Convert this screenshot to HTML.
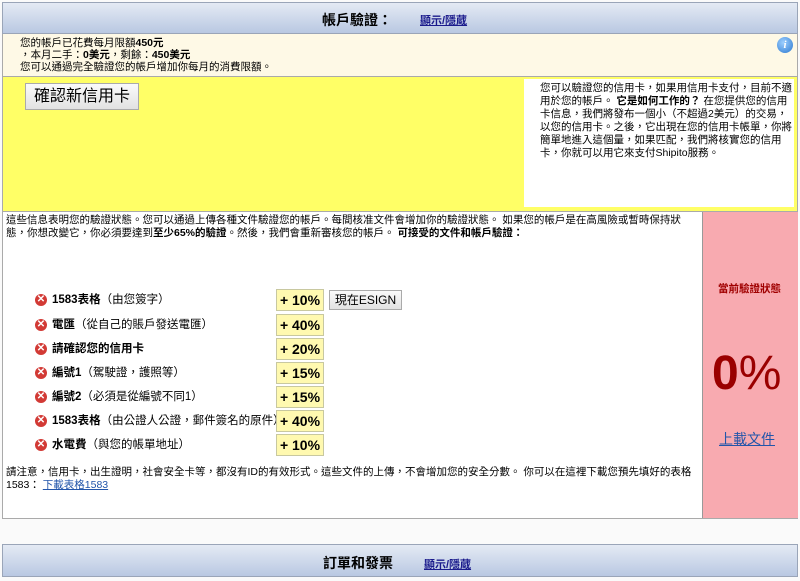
<!DOCTYPE html>
<html><head><meta charset="utf-8"><style>
body{margin:0;width:800px;height:581px;background:#fafafa;font-family:"Liberation Sans","Noto Sans CJK TC",sans-serif;font-size:11px;color:#000;position:relative;overflow:hidden}
.a{position:absolute}
.hdr{background:linear-gradient(#e4eaf4,#b9c8e2);border:1px solid #9aa5b8;box-sizing:border-box}
.ht{font-size:14px;font-weight:bold}
.lk{color:#1a1a8c;text-decoration:underline;font-weight:bold;font-size:11px}
.pc{position:absolute;left:276px;width:48px;height:22px;background:#fff9b0;border:1px solid #c8c8a0;box-sizing:border-box;font-weight:bold;font-size:14px;text-align:center;line-height:21px}
.x{position:absolute;left:35px;width:12px;height:12px;border-radius:50%;background:#d23a35;color:#fff;font-size:10px;line-height:12px;text-align:center;font-weight:bold}
.it{position:absolute;left:52px;font-size:11.5px;line-height:14px;white-space:nowrap}
</style></head><body>
<div class="a hdr" style="left:2px;top:2px;width:796px;height:32px"></div>
<div class="a ht" style="left:322px;top:10px">帳戶驗證：</div>
<div class="a lk" style="left:420px;top:12px">顯示/隱蔵</div>
<div class="a" style="left:2px;top:34px;width:796px;height:42px;background:#fef9e6;border-left:1px solid #aaa;border-right:1px solid #aaa;box-sizing:border-box"></div>
<div class="a" style="left:20px;top:37px;line-height:12px;font-size:10.5px">您的帳戶已花費每月限額<b>450元</b><br>，本月二手：<b>0美元</b>，剩餘：<b>450美元</b><br>您可以通過完全驗證您的帳戶增加你每月的消費限額。</div>
<div class="a" style="left:777px;top:37px;width:16px;height:16px;border-radius:50%;background:radial-gradient(circle at 40% 35%,#9fd0ff,#2a78d0);color:#fff;font-style:italic;font-weight:bold;font-size:11px;text-align:center;line-height:16px;font-family:'Liberation Serif',serif">i</div>
<div class="a" style="left:2px;top:76px;width:796px;height:136px;background:#ffff66;border:1px solid #aaa;box-sizing:border-box"></div>
<div class="a" style="left:25px;top:83px;width:114px;height:27px;background:linear-gradient(#fafafa,#e2e2e2);border:1px solid #aaa;box-sizing:border-box;font-size:16px;text-align:center;line-height:25px">確認新信用卡</div>
<div class="a" style="left:524px;top:79px;width:270px;height:128px;background:#fff"></div>
<div class="a" style="left:540px;top:82px;width:252px;line-height:13px;font-size:10.5px">您可以驗證您的信用卡，如果用信用卡支付，目前不適用於您的帳戶。 <b>它是如何工作的？</b> 在您提供您的信用卡信息，我們將發布一個小（不超過2美元）的交易，以您的信用卡。之後，它出現在您的信用卡帳單，你將簡單地進入這個量，如果匹配，我們將核實您的信用卡，你就可以用它來支付Shipito服務。</div>
<div class="a" style="left:2px;top:212px;width:796px;height:307px;background:#fff;border:1px solid #aaa;border-top:0;box-sizing:border-box"></div>
<div class="a" style="left:702px;top:212px;width:95px;height:306px;background:#f8aab0;border-left:1px solid #999"></div>
<div class="a" style="left:718px;top:281px;color:#a00000;font-weight:bold;font-size:10.5px">當前驗證狀態</div>
<div class="a" style="left:712px;top:346px;color:#9a0000;font-size:48px;line-height:56px"><b>0</b><span style="font-weight:normal">%</span></div>
<div class="a" style="left:719px;top:429px;color:#2255aa;text-decoration:underline;font-size:14px">上載文件</div>
<div class="a" style="left:6px;top:214px;width:694px;line-height:13px;font-size:10.5px">這些信息表明您的驗證狀態。您可以通過上傳各種文件驗證您的帳戶。每間核准文件會增加你的驗證狀態。 如果您的帳戶是在高風險或暫時保持狀態，你想改變它，你必須要達到<b>至少65%的驗證</b>。然後，我們會重新審核您的帳戶。 <b>可接受的文件和帳戶驗證：</b></div>
<div class="x" style="top:294px">✕</div><div class="it" style="top:293px"><b>1583表格</b>（由您簽字）</div><div class="pc" style="top:289px">+ 10%</div>
<div class="a" style="left:329px;top:290px;width:73px;height:20px;background:linear-gradient(#fafafa,#e2e2e2);border:1px solid #aaa;box-sizing:border-box;font-size:12px;text-align:center;line-height:18px">現在ESIGN</div>
<div class="x" style="top:319px">✕</div><div class="it" style="top:318px"><b>電匯</b>（從自己的賬戶發送電匯）</div><div class="pc" style="top:314px">+ 40%</div>
<div class="x" style="top:343px">✕</div><div class="it" style="top:342px"><b>請確認您的信用卡</b></div><div class="pc" style="top:338px">+ 20%</div>
<div class="x" style="top:367px">✕</div><div class="it" style="top:366px"><b>編號1</b>（駕駛證，護照等）</div><div class="pc" style="top:362px">+ 15%</div>
<div class="x" style="top:391px">✕</div><div class="it" style="top:390px"><b>編號2</b>（必須是從編號不同1）</div><div class="pc" style="top:386px">+ 15%</div>
<div class="x" style="top:415px">✕</div><div class="it" style="top:414px"><b>1583表格</b>（由公證人公證，郵件簽名的原件）</div><div class="pc" style="top:410px">+ 40%</div>
<div class="x" style="top:439px">✕</div><div class="it" style="top:438px"><b>水電費</b>（與您的帳單地址）</div><div class="pc" style="top:434px">+ 10%</div>
<div class="a" style="left:6px;top:466px;width:694px;line-height:13px;font-size:10.5px">請注意，信用卡，出生證明，社會安全卡等，都沒有ID的有效形式。這些文件的上傳，不會增加您的安全分數。 你可以在這裡下載您預先填好的表格1583： <span style="color:#2255aa;text-decoration:underline">下載表格1583</span></div>
<div class="a hdr" style="left:2px;top:544px;width:796px;height:33px"></div>
<div class="a ht" style="left:323px;top:553px">訂單和發票</div>
<div class="a lk" style="left:424px;top:556px">顯示/隱蔵</div>
</body></html>
